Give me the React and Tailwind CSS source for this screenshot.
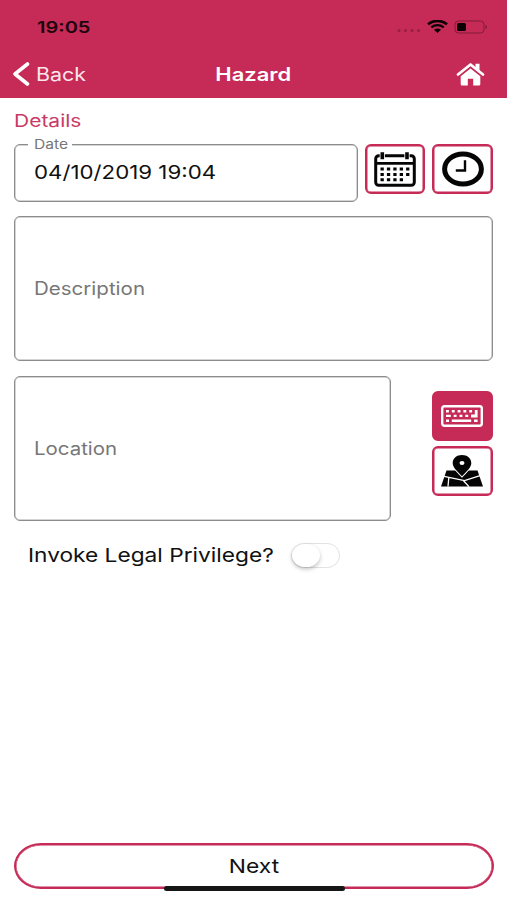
import { useState } from "react";

function HomeIcon() {
  return (
    <svg className="justify-self-end" width="29" height="25" viewBox="0 0 29 25" fill="none">
      <path d="M19.500 1.800h4v7l-4-3.500z" fill="#fff" />
      <path d="M2 12.500L14.500 2.500 27 12.500" stroke="#fff" strokeWidth="2.800" strokeLinecap="round" strokeLinejoin="round" />
      <path
        d="M14.500 6.600L24.300 14.300V22.300q0 1.200-1.200 1.200H17.200V16.800H11.800V23.500H5.900q-1.200 0-1.200-1.200V14.300z"
        fill="#fff"
      />
    </svg>
  );
}

function CalendarIcon() {
  return (
    <svg width="42" height="36" viewBox="0 0 42 36" fill="none">
      <rect x="1.700" y="4.700" width="38.600" height="29.600" rx="3" stroke="#050505" strokeWidth="3" />
      <path d="M2 12.400h38" stroke="#050505" strokeWidth="2.600" />
      <path d="M8.300 2v6M33 2v6" stroke="#fff" strokeWidth="5.200" />
      <path d="M8.300 1.300v7M33 1.300v7" stroke="#050505" strokeWidth="3.600" />
      <path
        d="M6.500 18h29M6.500 23.400h29M6.500 28.800h23"
        stroke="#050505"
        strokeWidth="3"
        strokeDasharray="3.300 3.100"
      />
    </svg>
  );
}

function ClockIcon() {
  return (
    <svg width="42" height="36" viewBox="0 0 42 36" fill="none">
      <ellipse cx="21" cy="18" rx="18.400" ry="15" stroke="#050505" strokeWidth="5" />
      <path d="M23 9.300v10.200h-9.200" stroke="#050505" strokeWidth="2.400" />
    </svg>
  );
}

function KeyboardIcon() {
  return (
    <svg width="42" height="22" viewBox="0 0 42 22" fill="none" stroke="#fff">
      <rect x="1.200" y="1.200" width="39.600" height="19.600" rx="2.200" strokeWidth="2.400" />
      <path d="M5 6.200h27" strokeWidth="2.400" strokeDasharray="2.900 2.900" />
      <path d="M5 10.900h4.800M12.700 10.900h2.900M18.500 10.900h2.900M24.300 10.900h2.900" strokeWidth="2.400" />
      <path d="M5 15.700h3M10.800 15.700h19.400M33 15.700h3.600" strokeWidth="2.400" />
      <path d="M35.200 5v6h-5.200" strokeWidth="2.800" />
    </svg>
  );
}

function MapIcon() {
  return (
    <svg width="42" height="32" viewBox="0 0 42 32" fill="#050505">
      <path d="M5.500 15.500h31L42 31.500H0z" />
      <path d="M3 21.300L23.500 25.600 39 20.700M7.800 22.500L7 31.500M22.500 25.700l5.500 6" fill="none" stroke="#fff" strokeWidth="1.300" />
      <path
        d="M21 0c-5.400 0-9.300 3.500-9.300 8 0 4.700 4.600 8.200 9.300 13.200 4.700-5 9.300-8.500 9.300-13.200C30.300 3.500 26.400 0 21 0z"
        stroke="#fff"
        strokeWidth="2"
        paintOrder="stroke"
      />
      <ellipse cx="21" cy="8" rx="2.500" ry="2.100" fill="#fff" />
    </svg>
  );
}

function IconButton({ active, label, children }) {
  return (
    <button
      aria-label={label}
      className={`flex h-[50px] w-[61px] items-center justify-center rounded-[6px] border-2 border-[#c62a57] shadow-[inset_0_0_0_0.5px_#c62a57] ${
        active ? "bg-[#c62a57]" : "bg-white"
      }`}
    >
      {children}
    </button>
  );
}

export default function App() {
  const [privilege, setPrivilege] = useState(false);

  return (
    <div
      className="flex h-[900px] w-[507px] flex-col overflow-hidden bg-white text-[#111]"
      style={{ fontFamily: 'Inter, "Liberation Sans", sans-serif' }}
    >
      {/* Header */}
      <header className="h-[98.4px] shrink-0 bg-[#c62a57]">
        <div className="flex h-[53px] items-center pl-[37px] pr-[19px]">
          <span className="origin-left scale-x-[1.25] text-[16px] font-semibold text-[#1c050c]">19:05</span>
          <div className="ml-auto flex items-center">
            <svg width="24" height="14" viewBox="0 0 24 14" fill="#971f42">
              <circle cx="2" cy="10.500" r="1.500" />
              <circle cx="8.500" cy="10.500" r="1.500" />
              <circle cx="15" cy="10.500" r="1.500" />
              <circle cx="21.500" cy="10.500" r="1.500" />
            </svg>
            <svg className="ml-[6px]" width="21" height="13" viewBox="0 0 21 13" fill="none" stroke="#0b0205">
              <path d="M1 4.300C6.500-.2 14.500-.2 20 4.300" strokeWidth="2.700" />
              <path d="M4.300 7.400c3.700-2.900 8.700-2.900 12.400 0" strokeWidth="2.400" />
              <path d="M7 9.800c2-1.600 5-1.600 7 0L10.500 13z" fill="#0b0205" stroke="none" />
            </svg>
            <svg className="ml-[6px]" width="34" height="14" viewBox="0 0 34 14" fill="none">
              <rect x="1" y="1" width="29" height="12" rx="3.500" stroke="#811b39" />
              <rect x="3" y="3" width="9" height="8" rx="1.500" fill="#0b0205" />
              <path d="M31.500 5c2 .5 2 3.500 0 4z" fill="#811b39" />
            </svg>
          </div>
        </div>
        <div className="grid h-[42px] grid-cols-3 items-center pl-[12px] pr-[22px] text-white">
          <button className="flex items-center text-left">
            <svg width="18" height="24" viewBox="0 0 18 24" fill="none">
              <path d="M15.500 2L3 12l12.500 10" stroke="#fff" strokeWidth="3.600" strokeLinecap="round" strokeLinejoin="round" />
            </svg>
            <span className="ml-[6px] origin-left scale-x-[1.19] text-[18px] text-[#fbe6ec]">Back</span>
          </button>
          <h1 className="ml-[9px] scale-x-[1.22] text-center text-[18px] font-semibold">Hazard</h1>
          <HomeIcon />
        </div>
      </header>

      {/* Form */}
      <main className="flex flex-1 flex-col px-[14px]">
        <h2 className="mt-[10px] h-[24px] w-fit origin-left scale-x-[1.2] text-[17.500px] leading-[25px] text-[#c93a66]">
          Details
        </h2>
        <div className="mt-[11.600px] flex gap-[7px]">
          <div className="relative flex h-[58px] w-[345px] items-center rounded-[6px] border border-[#8c8c8c] pl-[19px] shadow-[inset_0_0_0_0.5px_#aaa]">
            <span className="absolute -top-[10px] left-[13px] bg-white pl-[6px] pr-[10px] text-[13px] leading-[18px] text-[#777]">
              <span className="inline-block origin-left scale-x-[1.2]">Date</span>
            </span>
            <span className="origin-left scale-x-[1.172] whitespace-nowrap text-[19px]">04/10/2019 19:04</span>
          </div>
          <IconButton label="Pick date">
            <CalendarIcon />
          </IconButton>
          <IconButton label="Pick time">
            <ClockIcon />
          </IconButton>
        </div>

        <div className="mt-[14px] flex h-[145px] w-[479px] items-center rounded-[6px] border border-[#8c8c8c] pl-[19px] shadow-[inset_0_0_0_0.5px_#aaa]">
          <span className="mt-px origin-left scale-x-[1.14] text-[18px] text-[#777]">Description</span>
        </div>

        <div className="mt-[15px] flex w-[478.500px] justify-between">
          <div className="flex h-[145px] w-[377px] items-center rounded-[6px] border border-[#8c8c8c] pl-[19px] shadow-[inset_0_0_0_0.5px_#aaa]">
            <span className="origin-left scale-x-[1.135] text-[18px] text-[#777]">Location</span>
          </div>
          <div className="flex flex-col gap-[5px] pt-[15px]">
            <IconButton active label="Type location">
              <KeyboardIcon />
            </IconButton>
            <IconButton label="Choose on map">
              <MapIcon />
            </IconButton>
          </div>
        </div>

        <div className="mt-[20px] flex h-[30px] items-center pl-[14px]">
          <div className="w-[263px]">
            <span className="inline-block origin-left scale-x-[1.194] whitespace-nowrap text-[19px]">
              Invoke Legal Privilege?
            </span>
          </div>
          <button
            role="switch"
            aria-checked={privilege}
            aria-label="Invoke Legal Privilege"
            onClick={() => setPrivilege(!privilege)}
            className={`flex h-[25px] w-[49px] items-center rounded-full border border-[#e2e2e2] ${
              privilege ? "justify-end bg-[#c62a57]" : "bg-white"
            }`}
          >
            <span className="h-[23px] w-[28px] rounded-[50%] bg-white shadow-[0_2px_4px_rgba(0,0,0,0.25)]" />
          </button>
        </div>

        {/* Footer */}
        <div className="relative mb-[11px] mt-auto w-[480px]">
          <button className="flex h-[46px] w-full items-center justify-center rounded-[27px/23px] border-2 border-[#c62a57] pt-[2px] shadow-[inset_0_0_0_0.5px_#c62a57]">
            <span className="scale-x-[1.2] text-[19px]">Next</span>
          </button>
          <div className="absolute -bottom-[2px] left-[150px] h-[5.500px] w-[181px] rounded-full bg-[#161616]" />
        </div>
      </main>
    </div>
  );
}
